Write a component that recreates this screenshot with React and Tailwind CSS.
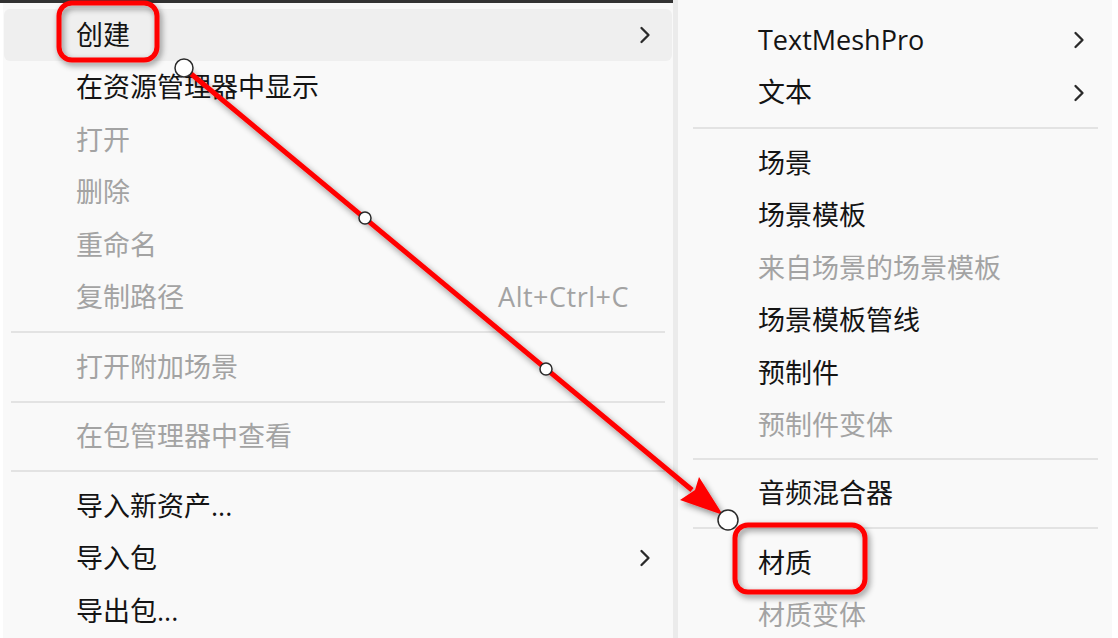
import { ChevronRight } from "lucide-react";

const leftItems = [
  { label: "创建", chevron: true, active: true },
  { label: "在资源管理器中显示" },
  { label: "打开", disabled: true },
  { label: "删除", disabled: true },
  { label: "重命名", disabled: true },
  { label: "复制路径", disabled: true, shortcut: "Alt+Ctrl+C" },
  { sep: "h-[17px]" },
  { label: "打开附加场景", disabled: true },
  { sep: "h-[17px]" },
  { label: "在包管理器中查看", disabled: true },
  { sep: "h-[17px]" },
  { label: "导入新资产..." },
  { label: "导入包", chevron: true },
  { label: "导出包..." },
];

const rightItems = [
  { label: "TextMeshPro", chevron: true },
  { label: "文本", chevron: true },
  { sep: "h-[18px]" },
  { label: "场景" },
  { label: "场景模板" },
  { label: "来自场景的场景模板", disabled: true },
  { label: "场景模板管线" },
  { label: "预制件" },
  { label: "预制件变体", disabled: true },
  { sep: "h-[15px]" },
  { label: "音频混合器" },
  { sep: "h-[17.5px]" },
  { label: "材质" },
  { label: "材质变体", disabled: true },
];

function MenuRow({ item, padding }) {
  return (
    <div
      className={`flex h-[52.5px] shrink-0 items-center rounded-md ${padding} ${
        item.active ? "bg-[#efefef]" : ""
      } ${item.disabled ? "text-[#a3a3a3]" : "text-[#141414]"}`}
    >
      <span className="flex-1 whitespace-nowrap">{item.label}</span>
      {item.shortcut ? <span className="mr-[2px] tracking-[0.5px]">{item.shortcut}</span> : null}
      <span className="flex w-[28px] justify-center text-[#2a2a2a]">
        {item.chevron ? <ChevronRight size={28} strokeWidth={2} /> : null}
      </span>
    </div>
  );
}

function Separator({ item, inset }) {
  return (
    <div className={`flex shrink-0 items-center ${item.sep} ${inset}`}>
      <div className="h-[2px] w-full bg-[#e3e3e3]" />
    </div>
  );
}

function Annotations() {
  return (
    <svg
      className="pointer-events-none absolute left-0 top-0"
      width="1118"
      height="638"
      viewBox="0 0 1118 638"
    >
      <defs>
        <filter id="shade" x="-20%" y="-20%" width="140%" height="140%">
          <feDropShadow dx="2" dy="3" stdDeviation="3" floodColor="#000" floodOpacity="0.45" />
        </filter>
      </defs>
      <g filter="url(#shade)">
        <rect x="59" y="3" width="98" height="57" rx="13" fill="none" stroke="#f00" strokeWidth="5" />
        <rect x="735" y="525" width="130" height="67" rx="13" fill="none" stroke="#f00" strokeWidth="5" />
        <line x1="184" y1="68" x2="692" y2="490" stroke="#f00" strokeWidth="5" />
        <polygon points="723,515 680,500 695,490 699,477" fill="#f00" />
      </g>
      <circle cx="184" cy="68" r="9" fill="#fff" stroke="#2b2b2b" strokeWidth="1.5" />
      <circle cx="365" cy="218" r="6" fill="#fff" stroke="#2b2b2b" strokeWidth="1.5" />
      <circle cx="546" cy="369" r="6" fill="#fff" stroke="#2b2b2b" strokeWidth="1.5" />
      <circle cx="728" cy="520" r="10" fill="#fff" stroke="#2b2b2b" strokeWidth="1.5" />
    </svg>
  );
}

export default function App() {
  return (
    <div className="relative flex h-[638px] w-[1118px] overflow-hidden bg-white font-['Open_Sans','Noto_Sans_CJK_SC',sans-serif] text-[27px]">
      <div className="ml-[3px] flex w-[670px] flex-col bg-[#f9f9f9]">
        <div className="-ml-[3px] h-[3px] w-[673px] shrink-0 bg-[#333333]" />
        <div className="flex flex-col px-px pt-[5.5px]">
          {leftItems.map((item, i) =>
            item.sep ? (
              <Separator key={i} item={item} inset="mx-[7px]" />
            ) : (
              <MenuRow key={i} item={item} padding="pl-[72px] pr-[13px]" />
            )
          )}
        </div>
      </div>
      <div className="w-[5px] bg-[#ebebeb]" />
      <div className="flex w-[434px] flex-col bg-[#f9f9f9] pt-[13.75px]">
        {rightItems.map((item, i) =>
          item.sep ? (
            <Separator key={i} item={item} inset="ml-[15px] mr-[14px]" />
          ) : (
            <MenuRow key={i} item={item} padding="pl-[80px] pr-[19px]" />
          )
        )}
      </div>
      <Annotations />
    </div>
  );
}
